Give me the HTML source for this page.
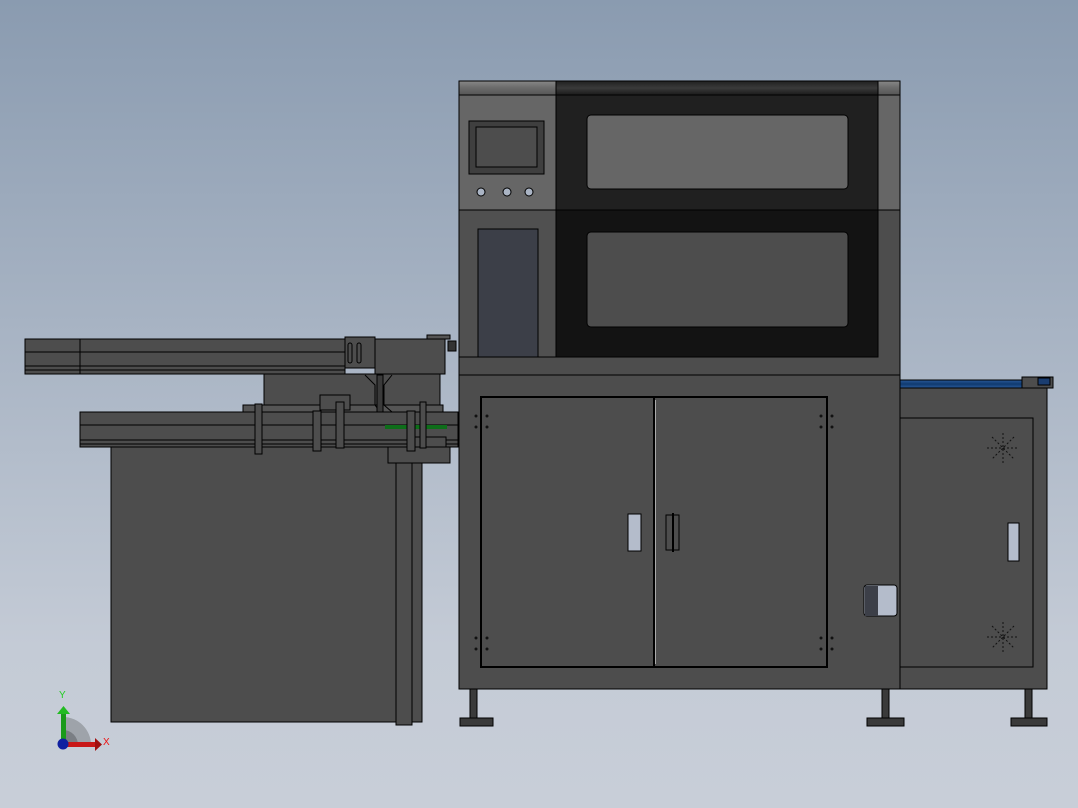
<!DOCTYPE html>
<html><head><meta charset="utf-8"><style>
html,body{margin:0;padding:0;width:1078px;height:808px;overflow:hidden}
body{background:linear-gradient(#8a9bb0,#c4cbd6 80%,#c8ced8)}
svg{position:absolute;left:0;top:0}
text{font-family:"Liberation Sans",sans-serif}
</style></head><body>
<svg width="1078" height="808" viewBox="0 0 1078 808">
<defs>
<linearGradient id="strip" x1="0" y1="0" x2="0" y2="1"><stop offset="0" stop-color="#888"/><stop offset="0.5" stop-color="#6a6a6a"/><stop offset="1" stop-color="#555"/></linearGradient>
<linearGradient id="stripd" x1="0" y1="0" x2="0" y2="1"><stop offset="0" stop-color="#202020"/><stop offset="0.5" stop-color="#3a3a3a"/><stop offset="1" stop-color="#1a1a1a"/></linearGradient>
<linearGradient id="blue" x1="0" y1="0" x2="0" y2="1"><stop offset="0" stop-color="#2a5a9a"/><stop offset="0.5" stop-color="#0f3a70"/><stop offset="1" stop-color="#2a5a9a"/></linearGradient>
</defs>
<g stroke="#000" stroke-width="1">
<!-- legs -->
<g fill="#3a3a3a">
<rect x="470" y="689" width="7" height="30"/><rect x="460" y="718" width="33" height="8"/>
<rect x="882" y="689" width="7" height="30"/><rect x="867" y="718" width="37" height="8"/>
<rect x="1025" y="689" width="7" height="30"/><rect x="1011" y="718" width="36" height="8"/>
</g>
<!-- left machine -->
<rect x="111" y="447" width="285" height="275" fill="#4d4d4d"/>
<rect x="412" y="447" width="10" height="275" fill="#4d4d4d"/>
<rect x="396" y="447" width="16" height="278" fill="#4d4d4d"/>
<rect x="264" y="374" width="176" height="40" fill="#4d4d4d"/>
<rect x="243" y="405" width="200" height="8" fill="#555"/>
<rect x="320" y="395" width="30" height="15" fill="#4d4d4d"/>
<path d="M365 375 L375 385 L375 405 L380 412 M392 375 L384 385 L384 405 L392 412" fill="none"/>
<rect x="377" y="375" width="6" height="37" fill="#3a3a3a"/>
<rect x="25" y="339" width="320" height="35" fill="#4d4d4d"/>
<line x1="25" y1="352" x2="345" y2="352"/><line x1="25" y1="366" x2="345" y2="366"/><line x1="25" y1="370" x2="345" y2="370"/>
<line x1="80" y1="339" x2="80" y2="374"/>
<rect x="345" y="337" width="30" height="31" fill="#4d4d4d"/>
<rect x="348" y="343" width="4" height="20" rx="2" fill="none"/><rect x="357" y="343" width="4" height="20" rx="2" fill="none"/>
<rect x="375" y="339" width="70" height="35" fill="#4d4d4d"/>
<rect x="427" y="335" width="23" height="4" fill="#555"/>
<rect x="448" y="341" width="8" height="10" fill="#333"/>
<rect x="80" y="412" width="378" height="35" fill="#4d4d4d"/>
<line x1="80" y1="425" x2="458" y2="425"/><line x1="80" y1="440" x2="458" y2="440"/><line x1="80" y1="444" x2="458" y2="444"/>
<rect x="385" y="425" width="62" height="4" fill="#0e6e1a" stroke="none"/>
<rect x="410" y="437" width="36" height="11" fill="#4d4d4d"/>
<rect x="388" y="447" width="62" height="16" fill="#4d4d4d"/>
<g fill="#4d4d4d">
<rect x="255" y="404" width="7" height="50"/><rect x="313" y="411" width="8" height="40"/><rect x="336" y="402" width="8" height="46"/><rect x="407" y="411" width="8" height="40"/><rect x="420" y="402" width="6" height="46"/>
</g>
<!-- right cabinet -->
<rect x="900" y="388" width="147" height="301" fill="#4d4d4d"/>
<rect x="900" y="418" width="133" height="249" fill="#4d4d4d"/>
<rect x="1008" y="523" width="11" height="38" fill="#b4bccb"/>
<rect x="900" y="380" width="122" height="8" fill="url(#blue)"/>
<rect x="1022" y="377" width="31" height="11" fill="#4d4d4d"/>
<rect x="1038" y="378" width="12" height="7" fill="#1a3d70"/>
<!-- main cabinet -->
<rect x="459" y="81" width="441" height="608" fill="#4d4d4d"/>
<rect x="459" y="95" width="97" height="115" fill="#666"/>
<rect x="878" y="95" width="22" height="115" fill="#666"/>
<rect x="459" y="210" width="97" height="147" fill="#505050"/>
<rect x="459" y="81" width="97" height="14" fill="url(#strip)"/>
<rect x="878" y="81" width="22" height="14" fill="url(#strip)"/>
<rect x="556" y="95" width="322" height="115" fill="#202020"/>
<rect x="556" y="210" width="322" height="147" fill="#131313"/>
<rect x="556" y="81" width="322" height="14" fill="url(#stripd)"/>
<rect x="587" y="115" width="261" height="74" rx="4" fill="#666"/>
<rect x="587" y="232" width="261" height="95" rx="4" fill="#4d4d4d"/>
<rect x="469" y="121" width="75" height="53" fill="#3f3f3f"/>
<rect x="476" y="127" width="61" height="40" fill="#4d4d4d"/>
<g fill="#aab4c4"><circle cx="481" cy="192" r="4"/><circle cx="507" cy="192" r="4"/><circle cx="529" cy="192" r="4"/></g>
<rect x="478" y="229" width="60" height="128" fill="#3c3f48"/>
<line x1="459" y1="375" x2="900" y2="375"/>
<rect x="481" y="397" width="346" height="270" fill="#4d4d4d" stroke-width="2"/>
<line x1="654" y1="397" x2="654" y2="667" stroke-width="2"/>
<line x1="655.5" y1="400" x2="655.5" y2="664" stroke="#aaa"/>
<rect x="628" y="514" width="13" height="37" fill="#b4bccb"/>
<rect x="666" y="515" width="13" height="35" fill="#4d4d4d"/>
<line x1="673" y1="513" x2="673" y2="552" stroke-width="2"/>
<rect x="864" y="585" width="33" height="31" rx="3" fill="#b4bccb"/>
<rect x="865" y="586" width="13" height="30" fill="#3c3f48" stroke="none"/>
</g>
<g fill="#111">
<circle cx="476" cy="416" r="1.5"/><circle cx="487" cy="416" r="1.5"/><circle cx="476" cy="427" r="1.5"/><circle cx="487" cy="427" r="1.5"/>
<circle cx="821" cy="416" r="1.5"/><circle cx="832" cy="416" r="1.5"/><circle cx="821" cy="427" r="1.5"/><circle cx="832" cy="427" r="1.5"/>
<circle cx="476" cy="638" r="1.5"/><circle cx="487" cy="638" r="1.5"/><circle cx="476" cy="649" r="1.5"/><circle cx="487" cy="649" r="1.5"/>
<circle cx="821" cy="638" r="1.5"/><circle cx="832" cy="638" r="1.5"/><circle cx="821" cy="649" r="1.5"/><circle cx="832" cy="649" r="1.5"/>
</g>
<g stroke="#111" stroke-dasharray="2 2" fill="none">
<path d="M987 448 H1019 M1003 433 V463 M992 437 L1014 459 M1014 437 L992 459"/>
<path d="M987 637 H1019 M1003 622 V652 M992 626 L1014 648 M1014 626 L992 648"/>
</g>
<!-- axis triad -->
<path d="M63 717 A28 28 0 0 1 91 745 L63 745 Z" fill="#9ea3aa"/>
<path d="M63 730 A15 15 0 0 1 78 745 L63 745 Z" fill="#7a7e84"/>
<rect x="61" y="712" width="5" height="33" fill="#1a9a1a"/>
<path d="M57 714 L63.5 706 L70 714 Z" fill="#22bb22"/>
<rect x="63" y="742" width="33" height="5" fill="#c81818"/>
<path d="M95 738 L102 744.5 L95 751 Z" fill="#a01010"/>
<circle cx="63" cy="744" r="5.5" fill="#1020a0"/>
<text x="59" y="698" font-size="10" fill="#22cc22">Y</text>
<text x="103" y="745" font-size="10" fill="#ee1111">X</text>
</svg>
</body></html>
